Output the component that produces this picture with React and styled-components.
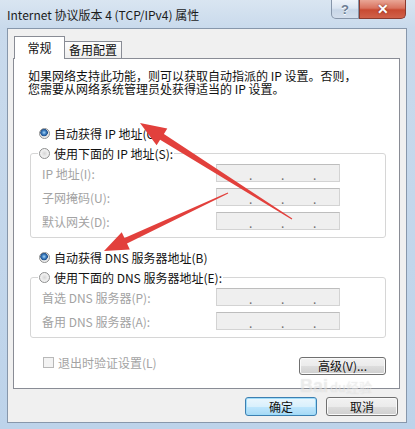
import React from "react";
import styled, { createGlobalStyle } from "styled-components";

const GlobalStyle = createGlobalStyle`
  html, body {
    margin: 0;
    padding: 0;
    background: #fff;
  }
  body {
    font-family: "Noto Sans CJK SC", "Liberation Sans", sans-serif;
    font-size: 12px;
  }
`;

const Window = styled.div`
  position: relative;
  width: 415px;
  height: 429px;
  display: flex;
  flex-direction: column;
  box-sizing: border-box;
  overflow: hidden;
  background: linear-gradient(180deg, #d9e5f1 0px, #c9daec 28px, #bdd3ea 100%);
`;

const TitleBar = styled.div`
  height: 28px;
  flex-shrink: 0;
  display: flex;
  align-items: flex-start;
  padding-left: 7px;
`;

const Title = styled.div`
  margin-top: 7px;
  font-size: 12px;
  line-height: 16px;
  color: #1b1b1b;
`;

const Caption = styled.div`
  margin-left: auto;
  margin-right: 9px;
  display: flex;
  height: 19px;
`;

const CapButton = styled.div`
  width: ${(p) => p.w}px;
  height: 19px;
  box-sizing: border-box;
  display: flex;
  align-items: center;
  justify-content: center;
  font-family: "Liberation Sans", sans-serif;
  font-weight: bold;
  border: 1px solid ${(p) => (p.close ? "#8a3a2e" : "#8796aa")};
  border-top: none;
  border-radius: ${(p) => (p.close ? "0 0 5px 0" : "0 0 0 5px")};
  background: ${(p) =>
    p.close
      ? "linear-gradient(180deg, #e9a696 0%, #d9735f 45%, #c84a32 55%, #d0614a 100%)"
      : "linear-gradient(180deg, #eef3f9 0%, #dbe5f1 45%, #c8d6e7 55%, #d3deec 100%)"};
  color: ${(p) => (p.close ? "#fff" : "#6b7c92")};
  font-size: ${(p) => (p.close ? "14px" : "13px")};
  text-shadow: ${(p) => (p.close ? "0 0 2px #6a1c10" : "0 1px 0 #fff")};
`;

const Client = styled.div`
  flex: 1;
  margin: 0 8px 6px 7px;
  background: #f0f0f0;
  border: 1px solid #8797ab;
  display: flex;
  flex-direction: column;
  padding: 7px 6px 0 5px;
  box-sizing: border-box;
`;

const TabRow = styled.div`
  display: flex;
  align-items: flex-end;
  padding-left: 1px;
  position: relative;
  z-index: 1;
  margin-bottom: -1px;
`;

const Tab = styled.div`
  box-sizing: border-box;
  width: ${(p) => (p.active ? 51 : 58)}px;
  height: ${(p) => (p.active ? 23 : 17)}px;
  margin-bottom: ${(p) => (p.active ? 0 : 1)}px;
  margin-left: ${(p) => (p.active ? 0 : -1)}px;
  border: 1px solid #898c95;
  border-bottom: none;
  background: ${(p) => (p.active ? "#fff" : "linear-gradient(180deg, #fdfdfd, #eeeeee)")};
  padding-top: ${(p) => (p.active ? 4 : 1)}px;
  line-height: 14px;
  font-size: 12px;
  text-align: center;
  color: #111;
`;

const Panel = styled.div`
  height: 331px;
  box-sizing: border-box;
  border: 1px solid #898c95;
  background: #fff;
  padding: 10px 13px 0 14px;
  display: flex;
  flex-direction: column;
  color: #111;
`;

const Intro = styled.p`
  margin: 0;
  font-size: 12px;
  line-height: 13px;
  white-space: nowrap;
`;

const RadioRow = styled.label`
  height: 20px;
  display: flex;
  align-items: center;
  gap: 4px;
  padding-left: ${(p) => p.indent || 0}px;
  margin-top: ${(p) => p.top || 0}px;
  font-size: 12px;
  color: #111;
  white-space: nowrap;
`;

const Radio = styled.span`
  width: 11px;
  height: 11px;
  box-sizing: border-box;
  border-radius: 50%;
  border: 1px solid #8e8f8f;
  background: ${(p) =>
    p.checked
      ? "radial-gradient(circle at 45% 40%, #a9d8f8 0, #3f7fc1 2px, #1d4f8c 3.5px, #e6e6e6 4px, #f8f8f8 100%)"
      : "radial-gradient(circle, #d6d6d6 0, #ececec 3px, #f9f9f9 100%)"};
  flex-shrink: 0;
`;

const GroupBox = styled.fieldset`
  margin: 0 0 0 2px;
  width: 356px;
  box-sizing: border-box;
  border: 1px solid #d6d6d6;
  border-radius: 3px;
  padding: 1px 0 7px 0;
  min-inline-size: 0;
`;

const Legend = styled.legend`
  margin-left: 7px;
  padding: 0 1px;
`;

const Rows = styled.div`
  display: flex;
  flex-direction: column;
  gap: 6px;
`;

const FieldRow = styled.div`
  height: 18px;
  display: flex;
  align-items: center;
  padding-left: 11px;
`;

const FieldLabel = styled.span`
  width: 174px;
  font-size: 12px;
  color: #a3a3a3;
  white-space: nowrap;
`;

const IpField = styled.div`
  width: 124px;
  height: 18px;
  box-sizing: border-box;
  border: 1px solid #d3d3d3;
  border-top-color: #bdbdbd;
  background: #efefef;
  display: flex;
  align-items: flex-end;
  padding-left: 32px;
  gap: 29px;
  font-size: 12px;
  line-height: 13px;
  color: #6d6d6d;
`;

const Dot = styled.span`
  width: 3px;
`;

const BottomRow = styled.div`
  display: flex;
  align-items: flex-start;
  margin-top: 17px;
`;

const CheckLabel = styled.label`
  display: flex;
  align-items: center;
  gap: 4px;
  padding-left: 15px;
  height: 14px;
  font-size: 12px;
  color: #a3a3a3;
`;

const CheckBox = styled.span`
  width: 11px;
  height: 11px;
  box-sizing: border-box;
  border: 1px solid #b8b8b8;
  background: #f3f3f3;
`;

const Button = styled.button`
  width: ${(p) => p.w}px;
  height: ${(p) => p.h || 19}px;
  box-sizing: border-box;
  margin: ${(p) => p.m || 0};
  padding: 0;
  font-family: "Noto Sans CJK SC", "Liberation Sans", sans-serif;
  font-size: 12px;
  line-height: 14px;
  color: #111;
  border-radius: 3px;
  border: 1px solid ${(p) => (p.primary ? "#3c7fb1" : "#707070")};
  background: ${(p) =>
    p.primary
      ? "linear-gradient(180deg, #eaf6fd 0%, #d9f0fc 50%, #bee6fd 51%, #a7d9f5 100%)"
      : "linear-gradient(180deg, #f2f2f2 0%, #ebebeb 50%, #dddddd 51%, #cfcfcf 100%)"};
  box-shadow: ${(p) => (p.primary ? "inset 0 0 0 1px #9fdcf9" : "inset 0 0 0 1px #fafafa")};
`;

const Footer = styled.div`
  display: flex;
  justify-content: flex-end;
  gap: 9px;
  margin-top: 8px;
  padding-right: 2px;
`;

const Overlay = styled.svg`
  position: absolute;
  left: 0;
  top: 0;
  pointer-events: none;
`;

const Watermark = styled.div`
  position: absolute;
  left: 300px;
  top: 377px;
  display: flex;
  align-items: baseline;
  gap: 2px;
  font-family: "Liberation Sans", sans-serif;
  font-weight: bold;
  font-size: 18px;
  line-height: 18px;
  color: rgba(255, 255, 255, 0.45);
  text-shadow: 0 0 1px rgba(140, 140, 140, 0.3);
  pointer-events: none;
`;

const WatermarkSmall = styled.span`
  font-family: "Noto Sans CJK SC", sans-serif;
  font-weight: normal;
  font-size: 13px;
`;

function arrowPoints(tail, tip, headLen, headW, shaftW) {
  const dx = tip[0] - tail[0];
  const dy = tip[1] - tail[1];
  const len = Math.hypot(dx, dy);
  const ux = dx / len;
  const uy = dy / len;
  const nx = -uy;
  const ny = ux;
  const bx = tip[0] - ux * headLen;
  const by = tip[1] - uy * headLen;
  const pts = [
    [tail[0] + nx * 0.5, tail[1] + ny * 0.5],
    [bx + nx * shaftW / 2, by + ny * shaftW / 2],
    [bx + nx * headW / 2, by + ny * headW / 2],
    tip,
    [bx - nx * headW / 2, by - ny * headW / 2],
    [bx - nx * shaftW / 2, by - ny * shaftW / 2],
    [tail[0] - nx * 0.5, tail[1] - ny * 0.5],
  ];
  return pts.map((p) => p.map((v) => v.toFixed(1)).join(",")).join(" ");
}

function Ip() {
  return (
    <IpField>
      <Dot>.</Dot>
      <Dot>.</Dot>
      <Dot>.</Dot>
    </IpField>
  );
}

const ipRows = ["IP 地址(I):", "子网掩码(U):", "默认网关(D):"];
const dnsRows = ["首选 DNS 服务器(P):", "备用 DNS 服务器(A):"];

export default function App() {
  return (
    <>
      <GlobalStyle />
      <Window>
        <TitleBar>
          <Title>Internet 协议版本 4 (TCP/IPv4) 属性</Title>
          <Caption>
            <CapButton w={28}>?</CapButton>
            <CapButton w={47} close>
              ✕
            </CapButton>
          </Caption>
        </TitleBar>
        <Client>
          <TabRow>
            <Tab active>常规</Tab>
            <Tab>备用配置</Tab>
          </TabRow>
          <Panel>
            <Intro>
              如果网络支持此功能，则可以获取自动指派的 IP 设置。否则，
              <br />
              您需要从网络系统管理员处获得适当的 IP 设置。
            </Intro>

            <RadioRow indent={11} top={28}>
              <Radio checked />
              自动获得 IP 地址(O)
            </RadioRow>
            <GroupBox>
              <Legend>
                <RadioRow>
                  <Radio />
                  使用下面的 IP 地址(S):
                </RadioRow>
              </Legend>
              <Rows>
                {ipRows.map((label) => (
                  <FieldRow key={label}>
                    <FieldLabel>{label}</FieldLabel>
                    <Ip />
                  </FieldRow>
                ))}
              </Rows>
            </GroupBox>

            <RadioRow indent={11} top={9}>
              <Radio checked />
              自动获得 DNS 服务器地址(B)
            </RadioRow>
            <GroupBox>
              <Legend>
                <RadioRow>
                  <Radio />
                  使用下面的 DNS 服务器地址(E):
                </RadioRow>
              </Legend>
              <Rows>
                {dnsRows.map((label) => (
                  <FieldRow key={label}>
                    <FieldLabel>{label}</FieldLabel>
                    <Ip />
                  </FieldRow>
                ))}
              </Rows>
            </GroupBox>

            <BottomRow>
              <CheckLabel>
                <CheckBox />
                退出时验证设置(L)
              </CheckLabel>
              <Button w={87} h={18} m="2px 0 0 auto">
                高级(V)...
              </Button>
            </BottomRow>
          </Panel>
          <Footer>
            <Button w={72} primary>
              确定
            </Button>
            <Button w={72}>取消</Button>
          </Footer>
        </Client>

        <Watermark>
          Bai<WatermarkSmall>du经验</WatermarkSmall>
        </Watermark>

        <Overlay width="415" height="429" viewBox="0 0 415 429">
          <polygon
            points={arrowPoints([292, 219], [140, 123], 26, 20, 7)}
            fill="#e2403c"
          />
          <polygon
            points={arrowPoints([228, 193], [104, 251], 24, 19, 6)}
            fill="#e2403c"
          />
        </Overlay>
      </Window>
    </>
  );
}
